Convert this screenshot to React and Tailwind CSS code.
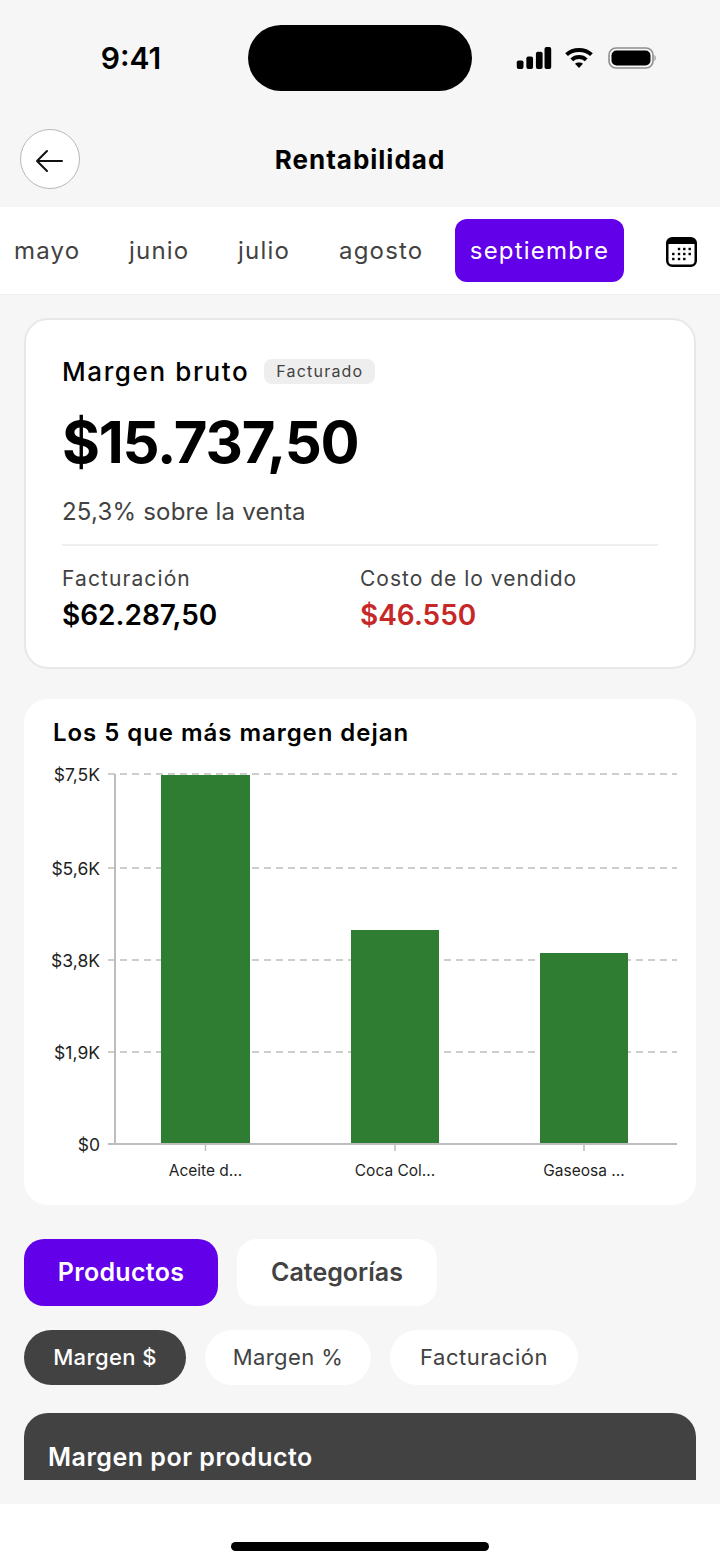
const MESES = [
  { label: 'mayo', w: 'w-[115px]' },
  { label: 'junio', w: 'w-[109px]' },
  { label: 'julio', w: 'w-[101px]' },
  { label: 'agosto', w: 'w-[116px]' },
];
const GRID = [
  { y: 75, label: '$7,5K' },
  { y: 169, label: '$5,6K' },
  { y: 261, label: '$3,8K' },
  { y: 353, label: '$1,9K' },
];
const BARRAS = [
  { x: 137, w: 89, y: 76, label: 'Aceite d...' },
  { x: 327, w: 88, y: 231, label: 'Coca Col...' },
  { x: 516, w: 88, y: 254, label: 'Gaseosa ...' },
];
const PUNTOS = [
  [13, 12], [18.3, 12], [23.7, 12],
  [7.3, 17], [13, 17], [18.3, 17], [23.7, 17],
  [7.3, 22], [13, 22], [18.3, 22],
];

function StatusBar() {
  return (
    <div className="h-[116px] flex items-start">
      <div className="w-[248px] pt-[25px] pl-[14px] text-center text-[30px] leading-[66px] font-semibold text-black">9:41</div>
      <div className="mt-[25px] w-[224px] h-[66px] rounded-[33px] bg-black" />
      <div className="ml-[44px] mt-[47px] flex items-center gap-[12px]">
        <svg width="36" height="22" viewBox="0 0 36 23" fill="black">
          <rect x="0" y="14" width="7" height="9" rx="2" />
          <rect x="10" y="10" width="7" height="13" rx="2" />
          <rect x="20" y="5" width="7" height="18" rx="2" />
          <rect x="29" y="0" width="7" height="23" rx="2" />
        </svg>
        <svg width="30" height="22" viewBox="0 0 30 23" fill="none" stroke="black" strokeWidth="4.2">
          <path d="M2 8 C9 1.5 21 1.5 28 8" />
          <path d="M7.5 13.5 C11.5 9.5 18.5 9.5 22.5 13.5" />
          <path d="M15 22 L10.8 17.6 C13 15.6 17 15.6 19.2 17.6 Z" fill="black" stroke="none" />
        </svg>
        <svg className="ml-[2px]" width="48" height="22" viewBox="0 0 48 22" fill="none">
          <rect x="1" y="1" width="44" height="20" rx="7" stroke="#8e8e8e" strokeWidth="1.6" />
          <rect x="3.5" y="3.5" width="39" height="15" rx="5" fill="black" />
          <path d="M46.5 8 C48 8.5 48 13.5 46.5 14 Z" fill="#8e8e8e" />
        </svg>
      </div>
    </div>
  );
}

function Chart() {
  return (
    <svg width="672" height="455" viewBox="0 51 672 455" className="block">
      {GRID.map(g => (
        <g key={g.y}>
          <line x1="84" x2="653" y1={g.y} y2={g.y} stroke="#bdbdbd" strokeWidth="1.5" strokeDasharray="7 5" />
          <text x="76" y={g.y + 6.5} textAnchor="end" fontSize="17.5" fill="#1f1f1f">{g.label}</text>
        </g>
      ))}
      <line x1="91" x2="91" y1="75" y2="445" stroke="#bdbdbd" strokeWidth="2" />
      {BARRAS.map(b => (
        <g key={b.label}>
          <rect x={b.x} y={b.y} width={b.w} height={445 - b.y} fill="#2e7d32" />
          <line x1={b.x + b.w / 2} x2={b.x + b.w / 2} y1="445" y2="452" stroke="#bdbdbd" strokeWidth="1.5" />
          <text x={b.x + b.w / 2} y="477" textAnchor="middle" fontSize="15.5" fill="#1f1f1f">{b.label}</text>
        </g>
      ))}
      <line x1="84" x2="653" y1="445" y2="445" stroke="#bdbdbd" strokeWidth="2" />
      <text x="76" y="452" textAnchor="end" fontSize="17.5" fill="#1f1f1f">$0</text>
    </svg>
  );
}

export default function App() {
  return (
    <div className="w-[720px] h-[1565px] overflow-hidden flex flex-col bg-[#f6f6f6] font-['Inter',sans-serif]">
      <StatusBar />

      {/* Header */}
      <div className="h-[91px] relative flex items-center justify-center pb-[5px]">
        <button className="absolute left-[20px] top-[13px] w-[60px] h-[60px] rounded-full bg-white border border-[#b8b8b8] flex items-center justify-center">
          <svg className="mt-[3px] mr-[3px]" width="30" height="26" viewBox="0 0 30 26" fill="none" stroke="#111" strokeWidth="2" strokeLinecap="round" strokeLinejoin="round">
            <path d="M28 13 H3 M13 3 L3 13 L13 23" />
          </svg>
        </button>
        <h1 className="text-[26px] font-bold text-black tracking-[1px]">Rentabilidad</h1>
      </div>

      {/* Meses */}
      <div className="h-[88px] bg-white border-b border-[#efefef] flex items-center shrink-0">
        <div className="flex items-center pl-[14px] text-[24px] text-[#424242] tracking-[1.2px]">
          {MESES.map(m => (
            <span key={m.label} className={m.w}>{m.label}</span>
          ))}
          <span className="w-[169px] h-[63px] rounded-[12px] bg-[#6200ea] text-white flex items-center justify-center">septiembre</span>
        </div>
        <svg className="ml-[42px] mt-[2px]" width="31" height="30" viewBox="0 0 31 30">
          <rect x="1.25" y="1.25" width="28.5" height="27.5" rx="5" fill="white" stroke="black" strokeWidth="2.5" />
          <path d="M1 7 V6 a5 5 0 0 1 5 -5 H25 a5 5 0 0 1 5 5 V7 Z" fill="black" />
          {PUNTOS.map(([x, y]) => (
            <rect key={`${x}-${y}`} x={x - 1.2} y={y - 1.2} width="2.4" height="2.4" fill="black" />
          ))}
        </svg>
      </div>

      <div className="px-[24px] pt-[23px] flex flex-col flex-1 min-h-0">
        {/* Resumen */}
        <div className="h-[351px] bg-white rounded-[24px] border-2 border-[#e8e8e8] px-[36px] pt-[31px]">
          <div className="flex items-center gap-[15px] h-[40px]">
            <span className="text-[26px] font-medium text-black tracking-[1.6px]">Margen bruto</span>
            <span className="h-[25px] px-[12px] rounded-[8px] bg-[#eeeeee] text-[16px] leading-[25px] text-[#424242] tracking-[1.2px]">Facturado</span>
          </div>
          <div className="mt-[16px] text-[58px] leading-[70px] font-bold text-black tracking-[-1.2px]">$15.737,50</div>
          <div className="mt-[18px] text-[24px] leading-[34px] text-[#424242] tracking-[0.2px]">25,3% sobre la venta</div>
          <div className="mt-[15px] h-[2px] bg-[#efefef]" />
          <div className="mt-[19px] grid grid-cols-2">
            <div>
              <div className="text-[21px] leading-[28px] text-[#424242] tracking-[1.1px]">Facturación</div>
              <div className="mt-[3px] text-[28px] leading-[38px] font-semibold text-black">$62.287,50</div>
            </div>
            <div>
              <div className="text-[21px] leading-[28px] text-[#424242] tracking-[1px]">Costo de lo vendido</div>
              <div className="mt-[3px] text-[28px] leading-[38px] font-semibold text-[#c62828]">$46.550</div>
            </div>
          </div>
        </div>

        {/* Grafico */}
        <div className="mt-[30px] h-[506px] bg-white rounded-[24px] pt-[17px]">
          <h2 className="pl-[29px] text-[24px] leading-[34px] font-semibold text-black tracking-[0.95px]">Los 5 que más margen dejan</h2>
          <Chart />
        </div>

        {/* Tabs */}
        <div className="mt-[34px] flex gap-[19px]">
          <button className="w-[194px] h-[67px] rounded-[20px] bg-[#6200ea] text-white text-[25px] font-semibold tracking-[0.3px]">Productos</button>
          <button className="w-[200px] h-[67px] rounded-[20px] bg-white text-[#424242] text-[25px] font-semibold">Categorías</button>
        </div>

        {/* Filtros */}
        <div className="mt-[24px] flex gap-[19px]">
          <button className="w-[162px] h-[55px] rounded-full bg-[#424242] text-white text-[22px] font-medium tracking-[0.4px]">Margen $</button>
          <button className="w-[166px] h-[55px] rounded-full bg-white text-[#424242] text-[22px] tracking-[0.4px]">Margen %</button>
          <button className="w-[188px] h-[55px] rounded-full bg-white text-[#424242] text-[22px] tracking-[0.5px]">Facturación</button>
        </div>

        {/* Tabla recortada */}
        <div className="mt-[28px] h-[67px] rounded-t-[24px] bg-[#424242] px-[24px] pt-[27px] text-[25px] leading-[34px] font-semibold text-white tracking-[0.5px] overflow-hidden">
          Margen por producto
        </div>
      </div>

      {/* Home indicator */}
      <div className="h-[61px] bg-white shrink-0 flex justify-center pt-[38px]">
        <div className="w-[258px] h-[9px] rounded-full bg-black" />
      </div>
    </div>
  );
}
